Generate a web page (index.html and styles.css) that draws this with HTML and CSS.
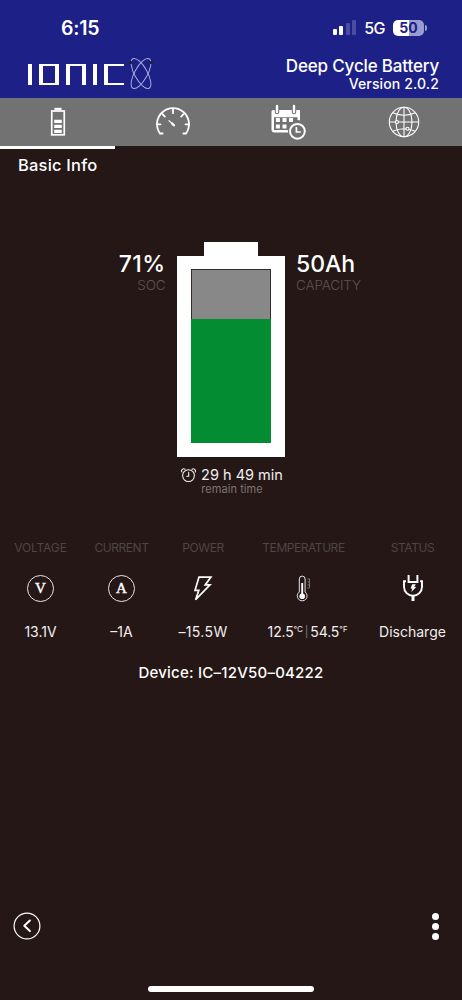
FILE: index.html
```
<!DOCTYPE html>
<html lang="en">
<head>
<meta charset="utf-8">
<title>Ionic Battery</title>
<link rel="stylesheet" href="styles.css">
</head>
<body>
<div class="app">
  <header class="header">
    <div class="status-bar">
      <span class="clock">6:15</span>
      <div class="signals">
        <div class="bars"><i class="b1"></i><i class="b2"></i><i class="b3 dim"></i><i class="b4 dim"></i></div>
        <span class="net">5G</span>
        <div class="charge"><span>50</span></div><i class="charge-tip"></i>
      </div>
    </div>
    <div class="brand">
      <div class="logo" role="img" aria-label="IONIC X">
        <i class="l-bar"></i><i class="l-box"></i><i class="l-arch"></i><i class="l-bar"></i><i class="l-open"></i>
        <svg class="atom" width="24" height="34" viewBox="0 0 24 34" fill="none" stroke="#a9acdf" stroke-width="1">
          <ellipse cx="12" cy="16.500" rx="6.400" ry="16.800" transform="rotate(-29 12 16.500)"/>
          <ellipse cx="12" cy="16.500" rx="6.400" ry="16.800" transform="rotate(29 12 16.500)"/>
          <circle cx="1.800" cy="5.500" r="1.700" fill="#222238" stroke="none"/><circle cx="22.200" cy="5.500" r="1.700" fill="#222238" stroke="none"/>
        </svg>
      </div>
      <div class="product"><div class="name"><span>Deep Cycle Battery</span></div><div class="version"><span>Version 2.0.2</span></div></div>
    </div>
  </header>
  <nav class="tabs">
    <a class="tab active"><svg width="16" height="30" viewBox="0 0 16 30" fill="none" stroke="#fff"><path d="M4.500 2h7" stroke-width="2.400"/><rect x="1.750" y="4" width="12.500" height="23.800" stroke-width="1.700"/><path d="M4.200 14.300h7.600M4.200 19.300h7.600M4.200 24.300h7.600" stroke-width="3.200"/></svg></a>
    <a class="tab"><svg width="36" height="30" viewBox="0 0 36 30" fill="none" stroke="#fff" stroke-width="1.800" stroke-linecap="round"><path d="M7.600 26.500H5A16 16 0 1 1 31 26.500H28.400"/><path d="M2.200 17.300h3.300M30.500 17.300h3.300M18 2v4.200M7.800 7.300l2 2.300M28.200 7.300l-2 2.300"/><path d="M14 13.600l5 4.800" stroke-width="1.300"/><path d="M17 16.400l2 2" stroke-width="2.200"/></svg></a>
    <a class="tab"><svg class="calendar" width="36" height="36" viewBox="0 0 36 36"><path d="M3 6h27v10.500a9 9 0 0 0-11.500 12H4.500A3 3 0 0 1 1.500 25.500V7.500A1.500 1.500 0 0 1 3 6z" fill="#fff"/><path d="M4 13.300h23.500v4a9 9 0 0 0-9 8.700H4z" fill="#727272"/><g fill="#fff"><path d="M5.900 14h4v4h-4zM12.500 14h4v4h-4zM19 14h4v4h-4zM5.900 20.400h4v4h-4zM12.500 20.400h4v4h-4z"/></g><g stroke-linecap="round"><path d="M7 2v6M24 2v6" stroke="#727272" stroke-width="4.500"/><path d="M7 2v6M24 2v6" stroke="#fff" stroke-width="2.400"/></g><circle cx="27.400" cy="27.300" r="9.300" fill="#727272"/><circle cx="27.400" cy="27.300" r="7.400" fill="none" stroke="#fff" stroke-width="2"/><path d="M26.400 23v5h4.400" fill="none" stroke="#fff" stroke-width="1.700"/></svg></a>
    <a class="tab"><svg width="32" height="32" viewBox="0 0 32 32" fill="none" stroke="#fff" stroke-width="1.100"><circle cx="16" cy="16" r="14.700"/><ellipse cx="16" cy="16" rx="8" ry="14.700"/><path d="M16 1.300v29.400M1.300 16h29.400M4.700 6.800q11.300 5 22.600 0M4.700 25.200q11.300-5 22.600 0"/><circle cx="9" cy="16" r="1.500" fill="#727272"/><circle cx="19.500" cy="22.700" r="1.500" fill="#727272"/></svg></a>
  </nav>
  <main class="main">
    <h1 class="title"><span>Basic Info</span></h1>
    <section class="overview">
      <div class="side left"><div class="figure soc"><span>71%</span></div><div class="caption"><span>SOC</span></div></div>
      <div class="battery"><div class="cap"></div><div class="case"><div class="cell"><div class="fill"></div></div></div></div>
      <div class="side"><div class="figure"><span>50Ah</span></div><div class="caption"><span>CAPACITY</span></div></div>
    </section>
    <section class="remain">
      <div class="time"><svg width="15" height="15" viewBox="0 0 15 15" fill="none" stroke="#f2eeee" stroke-width="1.100" stroke-linecap="round"><circle cx="7.500" cy="7.600" r="5.900"/><path d="M.8 4A2.200 2.200 0 0 1 4 1.200M14.200 4A2.200 2.200 0 0 0 11 1.200M7.700 4.400v3.900H5.700"/></svg><span>29 h 49 min</span></div>
      <div class="remain-label"><span>remain time</span></div>
    </section>
    <section class="metrics">
      <div class="metric"><div class="label"><span>VOLTAGE</span></div><div class="icon"><b class="unit">V</b></div><div class="value"><span>13.1V</span></div></div>
      <div class="metric"><div class="label"><span>CURRENT</span></div><div class="icon"><b class="unit">A</b></div><div class="value"><span>–1A</span></div></div>
      <div class="metric power"><div class="label"><span>POWER</span></div><div class="icon"><svg width="20" height="28" viewBox="0 0 20 28" fill="none" stroke="#fff" stroke-width="1.700"><path d="M6 2.100H17.900L12.200 9.900H17L2.600 24.700 5.800 15.300H2z"/></svg></div><div class="value"><span>–15.5W</span></div></div>
      <div class="metric temp"><div class="label"><span>TEMPERATURE</span></div><div class="icon"><svg width="16" height="28" viewBox="0 0 16 28" fill="none" stroke="#e8e3e3"><path d="M3.300 17V4a2.900 2.900 0 0 1 5.800 0v13a4.900 4.900 0 1 1-5.800 0z" stroke-width="1"/><circle cx="6.200" cy="21.300" r="2.800" fill="#fff" stroke="none"/><path d="M6.200 8v12" stroke="#fff" stroke-width="1.900"/><path d="M11.300 4h2.500M11.300 7h2M11.300 10h2.500M11.300 13h2M13.500 4v9" stroke="#8d8585" stroke-width=".8"/></svg></div><div class="value"><span>12.5<sup>℃</sup><em>|</em>54.5<sup>℉</sup></span></div></div>
      <div class="metric"><div class="label"><span>STATUS</span></div><div class="icon"><svg width="22" height="28" viewBox="0 0 22 28" fill="none" stroke="#fff" stroke-width="2"><path d="M6.600 0v7M15.400 0v7M5.600 7.100h10.800"/><path d="M4 6.200H2v5.500a9 9 0 0 0 18 0V6.200h-2" stroke-width="1.900"/><path d="M11 20v6" stroke-width="3"/><path d="M10.200 9.300h3.600l-1.500 2.700h2l-5 5 1-3.600H8.500z" fill="#fff" stroke="none"/></svg></div><div class="value"><span>Discharge</span></div></div>
    </section>
    <div class="device"><span>Device: IC–12V50–04222</span></div>
  </main>
  <footer class="footer">
    <svg width="28" height="28" viewBox="0 0 28 28" fill="none" stroke="#fff"><circle cx="14" cy="14" r="12.900" stroke-width="1.200"/><path d="M16.900 8.500L11.300 13.800l5.600 5.300" stroke-width="2" stroke-linecap="round" stroke-linejoin="round"/></svg>
    <div class="dots"><i></i><i></i><i></i></div>
  </footer>
  <div class="home"></div>
</div>
</body>
</html>
```
FILE: styles.css
```
* { box-sizing: border-box; }
body { margin: 0; background: #241716; }
i, em { font-style: normal; }
.app { width: 462px; height: 1000px; display: flex; flex-direction: column; background: #241716; color: #fff; font-family: Inter, sans-serif; overflow: hidden; white-space: nowrap; }
.header { height: 98px; background: #1d2086; flex: none; }
.status-bar { height: 55px; padding: 16px 35px 0 61px; display: flex; justify-content: space-between; align-items: flex-start; }
.clock { font-size: 19.500px; font-weight: 600; line-height: 24px; letter-spacing: -.2px; }
.signals { display: flex; align-items: center; height: 23px; }
.bars { display: flex; align-items: flex-end; gap: 2.500px; height: 16px; margin-top: -1px; }
.bars i { width: 4px; background: #fff; border-radius: 1px; }
.bars .dim { background: #4b4da0; }
.b1 { height: 6px; }
.b2 { height: 9px; }
.b3 { height: 12px; }
.b4 { height: 15px; }
.net { font-size: 16px; font-weight: 500; margin: 1px 8px 0; letter-spacing: -.5px; }
.charge { width: 31px; height: 16px; border-radius: 5px; background: linear-gradient(90deg, #fff 50%, #9a9bcf 50%); color: #1d2086; font-size: 14px; font-weight: 700; line-height: 16px; text-align: center; }
.charge-tip { width: 2px; height: 6px; margin-left: 1px; border-radius: 0 3px 3px 0; background: #9a9bcf; }
.brand { display: flex; justify-content: space-between; padding: 0 23px 0 28px; }
.logo { display: flex; height: 21px; margin-top: 9px; }
.logo i { border: 0 solid #fff; margin-right: 7px; }
.logo .l-bar { width: 4px; border-left-width: 4px; }
.logo .l-box { width: 20px; border-width: 2px 4px; }
.logo .l-arch { width: 20px; border-width: 2px 4px 0; }
.logo .l-open { width: 20px; border-width: 2px 0 2px 4px; margin-right: 0; }
.atom { margin: -7px 0 0 5px; overflow: visible; }
.product { text-align: right; padding-top: 1px; }
.name { font-size: 17px; font-weight: 500; line-height: 20px; letter-spacing: -.17px; }
.version { font-size: 14px; font-weight: 500; line-height: 17px; letter-spacing: .14px; margin-top: -1px; }
.tabs { height: 48px; flex: none; background: #727272; display: grid; grid-template-columns: repeat(4, 1fr); }
.tab { display: flex; align-items: center; justify-content: center; }
.calendar { margin-right: 1px; }
.active { position: relative; }
.active::after { content: ""; position: absolute; left: 0; top: 48px; width: 115px; height: 3px; background: #fff; }
.main { flex: 1; }
.title { margin: 0; padding: 9px 18px 0; height: 96px; font-size: 16.500px; font-weight: 500; line-height: 20px; letter-spacing: .2px; }
.overview { display: grid; grid-template-columns: 177px 108px 1fr; height: 215px; }
.side { padding: 8px 0 0 11px; }
.side.left { text-align: right; padding: 8px 11.500px 0 0; }
.figure { font-size: 23px; font-weight: 500; line-height: 28px; }
.soc { letter-spacing: .4px; }
.caption { font-size: 13.500px; font-weight: 300; line-height: 14px; color: #5d5352; letter-spacing: -.15px; margin-top: -.5px; }
.cap { width: 54px; height: 14px; margin: 0 auto; background: #fff; }
.case { height: 201px; padding: 13px 14px; background: #fff; }
.cell { height: 174px; border: 1px solid #302d2b; border-bottom: 0; background: #888; display: flex; align-items: flex-end; }
.fill { height: 71.700%; flex: 1; background: #038c31; margin: 0 -1px; }
.remain { height: 81px; text-align: center; padding: 8px 0 0 2px; }
.time { display: flex; justify-content: center; align-items: center; gap: 5px; font-size: 14.500px; line-height: 20px; height: 20px; color: #f2eeee; }
.remain-label { font-size: 11px; line-height: 12px; color: #7e7574; margin-top: -2px; letter-spacing: .05px; }
.metrics { display: grid; grid-template-columns: 81px 81px 82px 119px 99px; height: 123px; text-align: center; }
.label { font-size: 12px; line-height: 16px; margin-top: 2px; color: #504544; letter-spacing: -.45px; }
.metric:first-child .label { letter-spacing: -.15px; }
.icon { height: 28px; margin-top: 18px; padding-top: 1px; display: flex; justify-content: center; }
.unit { width: 27px; height: 27px; border: 1.500px solid #eae5e5; border-radius: 50%; font: 400 15px/25px "Liberation Serif", serif; -webkit-text-stroke: .4px #fff; }
.value { font-size: 14px; line-height: 18px; margin-top: 21px; color: #f2eeee; }
.power .value { letter-spacing: .35px; }
.temp .value { letter-spacing: -.15px; padding-left: 8px; }
.value sup { font-size: 8px; line-height: 0; vertical-align: 5px; }
.value em { color: #827b7a; font-size: 11px; margin: 0 2px; vertical-align: 1px; }
.device { text-align: center; font-size: 15px; font-weight: 500; line-height: 20px; letter-spacing: .22px; margin-top: 2px; }
.footer { height: 74px; flex: none; padding: 0 23px 0 13px; display: flex; justify-content: space-between; }
.dots { display: flex; flex-direction: column; gap: 3px; padding: 1px 0; }
.dots i { width: 7px; height: 7px; border-radius: 50%; background: #fff; }
.home { width: 166px; height: 6px; border-radius: 3px; background: #fff; margin: 0 auto 8px; flex: none; }
```
